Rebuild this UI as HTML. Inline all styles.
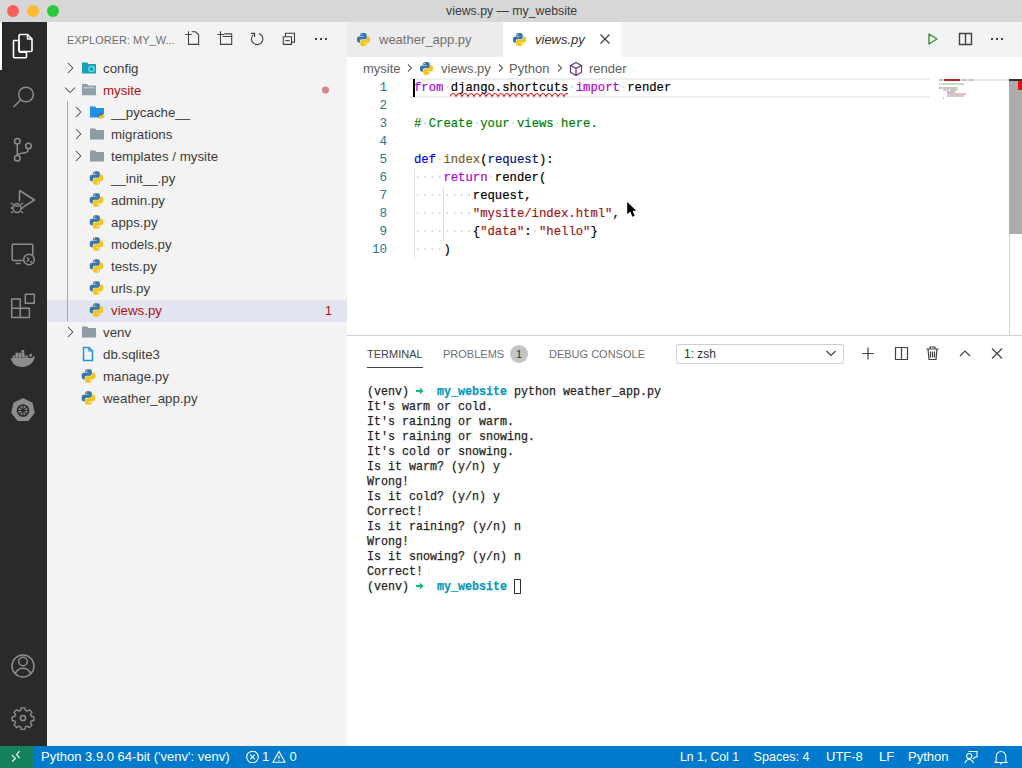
<!DOCTYPE html>
<html><head><meta charset="utf-8">
<style>
*{box-sizing:border-box;margin:0;padding:0}
html,body{width:1022px;height:768px;overflow:hidden;background:#fff;font-family:"Liberation Sans",sans-serif;}
.a{position:absolute;white-space:pre}
#title{left:0;top:0;width:1022px;height:22px;background:#d7d7d7;}
.light{position:absolute;top:5px;width:12px;height:12px;border-radius:50%}
#act{left:0;top:22px;width:47px;height:724px;background:#2a2a2b}
#side{left:47px;top:22px;width:300px;height:724px;background:#f3f3f3}
#tabs{left:347px;top:22px;width:675px;height:35px;background:#f3f3f3}
#panel{left:347px;top:335px;width:675px;height:411px;background:#fff;border-top:1px solid #cfcfcf}
#status{left:0;top:746px;width:1022px;height:22px;background:#007acc}
.st{position:absolute;top:749px;font-size:13px;color:#fff;white-space:pre;line-height:16px}
.fi{position:absolute;font-size:13.3px;color:#3c3c3c;white-space:pre;line-height:16px}
.code{position:absolute;left:414px;font-family:"Liberation Mono",monospace;font-size:13.5px;white-space:pre;color:#000;line-height:18px;-webkit-text-stroke:0.2px currentColor;transform:scaleX(0.9073);transform-origin:0 0}
.ln{position:absolute;left:347px;width:40px;text-align:right;font-family:"Liberation Mono",monospace;font-size:12.6px;color:#237893;line-height:18px}
.term{position:absolute;left:367px;font-family:"Liberation Mono",monospace;font-size:13px;white-space:pre;color:#222;line-height:15px;-webkit-text-stroke:0.25px currentColor;transform:scaleX(0.8974);transform-origin:0 0}
.k{color:#af00db}.d{color:#0000ff}.f{color:#795e26}.p{color:#001080}.s{color:#a31515}.c{color:#008000}
.ws{color:#d4d4d4;-webkit-text-stroke:0}
.bc{position:absolute;top:61px;font-size:13px;color:#616161;white-space:pre;line-height:16px}
.pt{position:absolute;top:347px;font-size:11px;color:#6f6f6f;white-space:pre;line-height:14px}
</style></head><body>
<svg width="0" height="0" style="position:absolute">
<defs>
<symbol id="py" viewBox="0 0 16 16">
<path fill="#3a75a8" d="M7.9 1C4.3 1 4.5 2.6 4.5 2.6v1.6H8v.5H3.1S1 4.5 1 8.1s2 3.4 2 3.4h1.2V9.8s-.1-2 1.9-2h3.4s1.9 0 1.9-1.8V2.9S11.700 1 7.9 1zM6 2.1a.6.6 0 1 1 0 1.2.6.6 0 0 1 0-1.2z"/>
<path fill="#f5c518" d="M8.1 15c3.6 0 3.4-1.6 3.4-1.6v-1.6H8v-.5h4.9S15 11.500 15 7.9s-2-3.4-2-3.4h-1.2v1.7s.1 2-1.9 2H6.5s-1.9 0-1.9 1.8v3.1S4.3 15 8.1 15zm1.9-1.1a.6.6 0 1 1 0-1.2.6.6 0 0 1 0 1.2z"/>
</symbol>
<symbol id="fold" viewBox="0 0 16 16">
<path fill="#90a4ae" d="M1 3h5l1.5 1.5H15V13H1z"/>
</symbol>
</defs>
</svg>

<!-- title bar -->
<div id="title" class="a">
  <div class="light" style="left:7px;background:#fc5f57"></div>
  <div class="light" style="left:27px;background:#fdbc2e"></div>
  <div class="light" style="left:47px;background:#28c840"></div>
  <div class="a" style="left:446px;top:3px;font-size:12.3px;color:#3a3a3a;line-height:16px">views.py — my_website</div>
</div>

<!-- activity bar -->
<div id="act" class="a"></div>
<div class="a" style="left:0;top:22px;width:1.5px;height:48px;background:#fff"></div>
<svg class="a" style="left:0;top:0" width="47" height="768" fill="none" stroke-linejoin="round">
  <!-- explorer -->
  <g stroke="#fff" stroke-width="1.6">
    <path d="M13.5 40.5h5.5v10.5a1.2 1.2 0 0 0 1.2 1.2h6.3v4.5a1 1 0 0 1-1 1h-11a1 1 0 0 1-1-1z"/>
    <path d="M20 34.5h7.5l4.5 4.5v11.5a1 1 0 0 1-1 1h-11a1 1 0 0 1-1-1v-15a1 1 0 0 1 1-1z"/>
    <path d="M27.5 34.5v4.5h4.5"/>
  </g>
  <g stroke="#8d8d8d" stroke-width="1.5">
    <!-- search -->
    <circle cx="26" cy="94.5" r="7.3"/>
    <path d="M20.8 99.7L13.5 107"/>
    <!-- scm -->
    <circle cx="17.3" cy="141.3" r="2.8"/>
    <circle cx="17.3" cy="158.2" r="2.8"/>
    <circle cx="28.5" cy="146" r="2.8"/>
    <path d="M17.3 144.1v11.3M28.5 148.8c0 3-2 4-5 4.3-3 .3-5.5 1-5.9 2.4"/>
    <!-- debug -->
    <path d="M19.5 190.5l15 9.5-11.5 7.2M19.5 190.5v11"/>
    <ellipse cx="17" cy="208" rx="4" ry="4.5"/>
    <path d="M13 204.5l-2-1.5M21 204.5l2-1.5M13 208h-2.5M21 208h2.5M13 211.5l-2 1.5M21 211.5l2 1.5M14.5 206h5"/>
    <!-- remote explorer -->
    <path d="M23 260.5H13.2a1 1 0 0 1-1-1V245.3a1 1 0 0 1 1-1h18.6a1 1 0 0 1 1 1v9.5M15.5 263.5h5"/>
    <circle cx="29" cy="259.5" r="5.3"/>
    <path d="M27 261.5l1.8-2-1.8-2M30 261.8h1.8"/>
    <!-- extensions -->
    <path d="M11.7 299h8.5v9.2h9.2v9.2H11.7z M11.7 308.2h8.5v9.2M25.3 294.3h9v9h-9z"/>
    <!-- accounts -->
    <circle cx="23" cy="666" r="11"/>
    <circle cx="23" cy="661.5" r="4.3"/>
    <path d="M15.2 673.8c1.5-3.5 4.5-5.5 7.8-5.5s6.3 2 7.8 5.5"/>
    <!-- settings -->
    <circle cx="23" cy="718" r="2.6"/>
    <path transform="translate(23 718) scale(0.92) translate(-23 -718)" d="M21 707h4l.6 2.8 1.8.8 2.5-1.6 2.8 2.8-1.6 2.5.8 1.8 2.8.6v4l-2.8.6-.8 1.8 1.6 2.5-2.8 2.8-2.5-1.6-1.8.8-.6 2.8h-4l-.6-2.8-1.8-.8-2.5 1.6-2.8-2.8 1.6-2.5-.8-1.8-2.8-.6v-4l2.8-.6.8-1.8-1.6-2.5 2.8-2.8 2.5 1.6 1.8-.8z"/>
  </g>
  <!-- docker -->
  <path fill="#8d8d8d" d="M11 358H31.5l3.5-2.2c-.3 4.5-4 11-12.5 11.2C15.5 367 11.3 363 11 358z M21.5 350h2.7v2.6h-2.7z M15.5 352.8h2.7v2.6h-2.7z M18.6 352.8h2.7v2.6h-2.7z M21.7 352.8h2.7v2.6h-2.7z M12.8 355.5h2.7v2.3h-2.7z M15.9 355.5h2.7v2.3h-2.7z M19 355.5h2.7v2.3h-2.7z M22.1 355.5h2.7v2.3h-2.7z M25.2 355.5h2.7v2.3h-2.7z M29 356.5c.3-1.8 1.2-3 2-3.3.8.8 1.2 2 1 3.3z"/>
  <!-- kubernetes -->
  <path fill="#8d8d8d" stroke="#8d8d8d" stroke-width="1.6" stroke-linejoin="round" d="M23 399l8.8 4.2 2.1 9.5-6 7.5h-9.8l-6-7.5 2.1-9.5z"/>
  <circle cx="23" cy="410.5" r="5.5" stroke="#2a2a2b" stroke-width="1.6"/>
  <path stroke="#2a2a2b" stroke-width="1.2" d="M23 405v11M17.5 410.5h11M19.1 406.6l7.8 7.8M26.9 406.6l-7.8 7.8"/>
</svg>

<!-- sidebar -->
<div id="side" class="a"></div>
<div class="a" style="left:67px;top:33px;font-size:11px;color:#6f6f6f;line-height:14px">EXPLORER: MY_W...</div>
<svg class="a" style="left:0;top:0" width="347" height="60" fill="none" stroke="#424242" stroke-width="1.1">
  <path d="M185.3 34.5h6.4M188.5 31.3v6.7"/><path d="M188.5 38v6.4h10.1v-9.6l-3-3h-3.9"/>
  <path d="M217.3 34.5h6.7M220.5 31.3v6.7"/><path d="M220.5 38v6.4h11.2v-10.5h-7.5M222.5 36.5h9.2"/>
  <path d="M258.9 33.5A5.7 5.7 0 1 1 253.4 34.6"/><path d="M251 33.4h3.6v3.5"/>
  <path d="M285.5 36.8v-3.5h9v8.8h-3"/><path d="M283.3 36.8h8.2v7.6h-8.2z"/><path d="M285.2 40.6h4.4"/>
</svg>
<div class="a" style="left:315px;top:38px;width:2px;height:2px;background:#424242;box-shadow:5px 0 #424242,10px 0 #424242"></div>

<div id="tree">
<div class="a" style="left:47px;top:300px;width:300px;height:22px;background:#e2e5f1"></div>
<div class="a" style="left:67px;top:101px;width:1px;height:220px;background:#a9a9a9"></div>
<div class="fi" style="left:103px;top:61px;color:#3c3c3c">config</div>
<div class="fi" style="left:103px;top:83px;color:#b01011">mysite</div>
<div class="fi" style="left:111px;top:105px;color:#3c3c3c">__pycache__</div>
<div class="fi" style="left:111px;top:127px;color:#3c3c3c">migrations</div>
<div class="fi" style="left:111px;top:149px;color:#3c3c3c">templates / mysite</div>
<div class="fi" style="left:111px;top:171px;color:#3c3c3c">__init__.py</div>
<div class="fi" style="left:111px;top:193px;color:#3c3c3c">admin.py</div>
<div class="fi" style="left:111px;top:215px;color:#3c3c3c">apps.py</div>
<div class="fi" style="left:111px;top:237px;color:#3c3c3c">models.py</div>
<div class="fi" style="left:111px;top:259px;color:#3c3c3c">tests.py</div>
<div class="fi" style="left:111px;top:281px;color:#3c3c3c">urls.py</div>
<div class="fi" style="left:111px;top:303px;color:#b01011">views.py</div>
<div class="fi" style="left:103px;top:325px;color:#3c3c3c">venv</div>
<div class="fi" style="left:103px;top:347px;color:#3c3c3c">db.sqlite3</div>
<div class="fi" style="left:103px;top:369px;color:#3c3c3c">manage.py</div>
<div class="fi" style="left:103px;top:391px;color:#3c3c3c">weather_app.py</div>
<svg class="a" style="left:0;top:0" width="347" height="420" fill="none">
<path d="M68 63l4.8 5-4.8 5" stroke="#555" stroke-width="1.05"/>
<path d="M82 62.5h5l1.5 1.5h7.5v9.5h-14z" fill="#1ba1b5"/>
<circle cx="91.5" cy="69" r="2.6" stroke="#5fe0ee" stroke-width="1.4"/>
<path d="M65 87.5l5 5 5-5" stroke="#555" stroke-width="1.05"/>
<path d="M82 84h5l1.5 1.5h7.5v9.8h-14z" fill="#90a0aa"/>
<path d="M83.5 87.8h11" stroke="#cfd8dc" stroke-width="1"/>
<path d="M76 107l4.8 5-4.8 5" stroke="#555" stroke-width="1.05"/>
<path d="M90 106.5h5l1.5 1.5h7.5v9.5h-14z" fill="#1e90e6"/>
<use href="#py" x="97" y="111.5" width="8" height="8"/>
<path d="M76 129l4.8 5-4.8 5" stroke="#555" stroke-width="1.05"/>
<path d="M90 128.5h5l1.5 1.5h7.5v9.5h-14z" fill="#8d9ba5"/>
<path d="M76 151l4.8 5-4.8 5" stroke="#555" stroke-width="1.05"/>
<path d="M90 150.5h5l1.5 1.5h7.5v9.5h-14z" fill="#8d9ba5"/>
<use href="#py" x="88.7" y="170.2" width="15.6" height="15.6"/>
<use href="#py" x="88.7" y="192.2" width="15.6" height="15.6"/>
<use href="#py" x="88.7" y="214.2" width="15.6" height="15.6"/>
<use href="#py" x="88.7" y="236.2" width="15.6" height="15.6"/>
<use href="#py" x="88.7" y="258.2" width="15.6" height="15.6"/>
<use href="#py" x="88.7" y="280.2" width="15.6" height="15.6"/>
<use href="#py" x="88.7" y="302.2" width="15.6" height="15.6"/>
<path d="M68 327l4.8 5-4.8 5" stroke="#555" stroke-width="1.05"/>
<path d="M82 326.5h5l1.5 1.5h7.5v9.5h-14z" fill="#8d9ba5"/>
<path d="M83.5 347.5h5.5l3.5 3.5v9.5h-9z" stroke="#1e90e6" stroke-width="1.5"/>
<path d="M89 347.5v3.5h3.5" stroke="#1e90e6" stroke-width="1.2"/>
<use href="#py" x="80.7" y="368.2" width="15.6" height="15.6"/>
<use href="#py" x="80.7" y="390.2" width="15.6" height="15.6"/>
<circle cx="325.5" cy="90" r="3.5" fill="#d4858a"/>
</svg>
<div class="fi" style="left:325px;top:303px;color:#b01011;font-size:12.5px">1</div>
</div><!--/tree-->

<!-- tabs -->
<div id="tabs" class="a"></div>
<div class="a" style="left:347px;top:22px;width:156px;height:35px;background:#ececec"></div>
<div class="a" style="left:503px;top:22px;width:118px;height:35px;background:#fff"></div>
<svg class="a" style="left:356px;top:32px" width="15" height="15"><use href="#py"/></svg>
<div class="a" style="left:379px;top:32px;font-size:13px;color:#717171;line-height:16px">weather_app.py</div>
<svg class="a" style="left:512px;top:32px" width="15" height="15"><use href="#py"/></svg>
<div class="a" style="left:535px;top:32px;font-size:13px;color:#333;font-style:italic;line-height:16px">views.py</div>
<svg class="a" style="left:599px;top:33px" width="12" height="12" stroke="#424242" stroke-width="1.3"><path d="M1.5 1.5l9 9M10.5 1.5l-9 9"/></svg>
<!-- editor actions -->
<svg class="a" style="left:920px;top:27px" width="100" height="24" fill="none" stroke-width="1.4">
  <path d="M9 7l8 5-8 5z" stroke="#388a34" stroke-linejoin="round"/>
  <path d="M39.5 6.5h12v11h-12zM45.5 6.5v11" stroke="#424242"/>
</svg>
<div class="a" style="left:991px;top:38px;width:2px;height:2px;background:#424242;box-shadow:5px 0 #424242,10px 0 #424242"></div>

<div id="edit">
<div class="a" style="left:409px;top:78px;width:521px;height:20px;border-top:2px solid #eeeeee;border-bottom:2px solid #eeeeee"></div>
<div class="ln" style="top:79px">1</div>
<div class="code" style="top:79px"><span class="k">from</span><span class="ws">·</span>django.shortcuts<span class="ws">·</span><span class="k">import</span><span class="ws">·</span>render</div>
<div class="ln" style="top:97px">2</div>
<div class="ln" style="top:115px">3</div>
<div class="code" style="top:115px"><span class="c">#</span><span class="ws">·</span><span class="c">Create</span><span class="ws">·</span><span class="c">your</span><span class="ws">·</span><span class="c">views</span><span class="ws">·</span><span class="c">here.</span></div>
<div class="ln" style="top:133px">4</div>
<div class="ln" style="top:151px">5</div>
<div class="code" style="top:151px"><span class="d">def</span><span class="ws">·</span><span class="f">index</span>(<span class="p">request</span>):</div>
<div class="ln" style="top:169px">6</div>
<div class="code" style="top:169px"><span class="ws">····</span><span class="k">return</span><span class="ws">·</span>render(</div>
<div class="ln" style="top:187px">7</div>
<div class="code" style="top:187px"><span class="ws">········</span>request,</div>
<div class="ln" style="top:205px">8</div>
<div class="code" style="top:205px"><span class="ws">········</span><span class="s">"mysite/index.html"</span>,</div>
<div class="ln" style="top:223px">9</div>
<div class="code" style="top:223px"><span class="ws">········</span>{<span class="s">"data"</span>:<span class="ws">·</span><span class="s">"hello"</span>}</div>
<div class="ln" style="top:241px">10</div>
<div class="code" style="top:241px"><span class="ws">····</span>)</div>
<div class="a" style="left:414px;top:169px;width:1px;height:90px;background:#dedede"></div>
<div class="a" style="left:443px;top:187px;width:1px;height:54px;background:#dedede"></div>
<div class="a" style="left:413px;top:79px;width:2px;height:18px;background:#000"></div>
<svg class="a" style="left:450px;top:92px" width="118" height="6"><path d="M0 4.3 c1 -1.8 2 -2.8 3 -2.8 c1 0 2 1 3 2.8 c1 -1.8 2 -2.8 3 -2.8 c1 0 2 1 3 2.8 c1 -1.8 2 -2.8 3 -2.8 c1 0 2 1 3 2.8 c1 -1.8 2 -2.8 3 -2.8 c1 0 2 1 3 2.8 c1 -1.8 2 -2.8 3 -2.8 c1 0 2 1 3 2.8 c1 -1.8 2 -2.8 3 -2.8 c1 0 2 1 3 2.8 c1 -1.8 2 -2.8 3 -2.8 c1 0 2 1 3 2.8 c1 -1.8 2 -2.8 3 -2.8 c1 0 2 1 3 2.8 c1 -1.8 2 -2.8 3 -2.8 c1 0 2 1 3 2.8 c1 -1.8 2 -2.8 3 -2.8 c1 0 2 1 3 2.8 c1 -1.8 2 -2.8 3 -2.8 c1 0 2 1 3 2.8 c1 -1.8 2 -2.8 3 -2.8 c1 0 2 1 3 2.8 c1 -1.8 2 -2.8 3 -2.8 c1 0 2 1 3 2.8 c1 -1.8 2 -2.8 3 -2.8 c1 0 2 1 3 2.8 c1 -1.8 2 -2.8 3 -2.8 c1 0 2 1 3 2.8 c1 -1.8 2 -2.8 3 -2.8 c1 0 2 1 3 2.8 c1 -1.8 2 -2.8 3 -2.8 c1 0 2 1 3 2.8 c1 -1.8 2 -2.8 3 -2.8 c1 0 2 1 3 2.8 c1 -1.8 2 -2.8 3 -2.8 c1 0 2 1 3 2.8 c1 -1.8 2 -2.8 3 -2.8 c1 0 2 1 3 2.8" fill="none" stroke="#d81818" stroke-width="1.2"/></svg>
<div class="bc" style="left:363px">mysite</div>
<svg class="a" style="left:405px;top:60px" width="240" height="16" fill="none" stroke="#616161" stroke-width="1.1"><path d="M3 4.5l3.5 3.5-3.5 3.5"/><path d="M94 4.5l3.5 3.5-3.5 3.5"/><path d="M153 4.5l3.5 3.5-3.5 3.5"/></svg>
<svg class="a" style="left:419px;top:61px" width="15" height="15"><use href="#py"/></svg>
<div class="bc" style="left:441px">views.py</div>
<div class="bc" style="left:509px">Python</div>
<svg class="a" style="left:568px;top:61px" width="16" height="16" fill="none" stroke="#652d90" stroke-width="1.2" stroke-linejoin="round"><path d="M8 1.5l5.5 3v6.8L8 14.5l-5.5-3.2V4.5z M2.5 4.5L8 7.6l5.5-3.1M8 7.6v6.9"/></svg>
<div class="bc" style="left:589px">render</div>
<div class="a" style="left:939px;top:79px;width:70px;height:2px;background:#e1ebf5"></div>
<div class="a" style="left:939px;top:79px;width:4px;height:2px;background:#b89cc0;opacity:0.6"></div>
<div class="a" style="left:944px;top:79px;width:16px;height:2px;background:#b0282a;opacity:1"></div>
<div class="a" style="left:961px;top:79px;width:6px;height:2px;background:#c0a0c8;opacity:0.6"></div>
<div class="a" style="left:968px;top:79px;width:6px;height:2px;background:#a8b0a8;opacity:0.6"></div>
<div class="a" style="left:939px;top:83px;width:1px;height:2px;background:#90b890;opacity:0.6"></div>
<div class="a" style="left:941px;top:83px;width:23px;height:2px;background:#a0c4a0;opacity:0.6"></div>
<div class="a" style="left:939px;top:87px;width:3px;height:2px;background:#8080e0;opacity:0.6"></div>
<div class="a" style="left:943px;top:87px;width:15px;height:2px;background:#a8a090;opacity:0.6"></div>
<div class="a" style="left:943px;top:89px;width:6px;height:2px;background:#c8a0d0;opacity:0.6"></div>
<div class="a" style="left:950px;top:89px;width:7px;height:2px;background:#a0a0a0;opacity:0.6"></div>
<div class="a" style="left:947px;top:91px;width:8px;height:2px;background:#9898c0;opacity:0.6"></div>
<div class="a" style="left:947px;top:93px;width:19px;height:2px;background:#c89898;opacity:0.6"></div>
<div class="a" style="left:947px;top:95px;width:17px;height:2px;background:#b8a4a4;opacity:0.6"></div>
<div class="a" style="left:943px;top:97px;width:1px;height:2px;background:#a0a0a0;opacity:0.6"></div>
<div class="a" style="left:939px;top:79px;width:70px;height:2px;background:rgba(0,0,0,0.0)"></div>
<div class="a" style="left:1009px;top:79px;width:1px;height:256px;background:#d5d5d5"></div>
<div class="a" style="left:1009px;top:79px;width:13px;height:155px;background:#acacac"></div>
<div class="a" style="left:1009px;top:79px;width:13px;height:2px;background:#333"></div>
<div class="a" style="left:1018px;top:81px;width:4px;height:9px;background:#e51400"></div>
<svg class="a" style="left:624px;top:199px" width="16" height="22"><path transform="translate(3.2 3) scale(1.08)" d="M0 0V11.4L2.8 8.8 4.8 13.6 6.9 12.8 5 8.1H8.4Z" fill="#000" stroke="#fff" stroke-width="1.2" stroke-linejoin="round" paint-order="stroke"/></svg>
</div><!--/edit-->

<!-- panel -->
<div id="panel" class="a"></div>
<div id="term">
<div class="pt" style="left:367px;color:#424242">TERMINAL</div>
<div class="a" style="left:367px;top:367px;width:56px;height:1px;background:#424242"></div>
<div class="pt" style="left:443px">PROBLEMS</div>
<div class="a" style="left:510px;top:345px;width:18px;height:18px;border-radius:50%;background:#c4c4c4"></div>
<div class="a" style="left:510px;top:347px;width:18px;text-align:center;font-size:11px;line-height:14px;color:#333">1</div>
<div class="pt" style="left:549px">DEBUG CONSOLE</div>
<div class="a" style="left:676px;top:344px;width:168px;height:20px;border:1px solid #cecece;border-radius:3px;background:#fff"></div>
<div class="a" style="left:684px;top:347px;font-size:12px;line-height:14px;color:#333">1: zsh</div>
<svg class="a" style="left:0;top:330px" width="1022" height="40" fill="none" stroke="#424242" stroke-width="1.2"><path d="M826.5 21l4.5 4.5 4.5-4.5"/><path d="M868 17.5v12M862 23.5h12"/><path d="M895.5 17.5h12v12h-12zM901.5 17.5v12"/><path d="M926.5 19h12M930 19v-2h5v2M928 19l1 10.5h7l1-10.5M930.5 21.5v6M932.5 21.5v6M934.5 21.5v6"/><path d="M960 26l5-5 5 5"/><path d="M992 18.5l10 10M1002 18.5l-10 10"/></svg>
<div class="term" style="top:384px">(venv)    <b style="color:#0598bc">my_website</b> python weather_app.py</div>
<div class="term" style="top:399px">It's warm or cold.</div>
<div class="term" style="top:414px">It's raining or warm.</div>
<div class="term" style="top:429px">It's raining or snowing.</div>
<div class="term" style="top:444px">It's cold or snowing.</div>
<div class="term" style="top:459px">Is it warm? (y/n) y</div>
<div class="term" style="top:474px">Wrong!</div>
<div class="term" style="top:489px">Is it cold? (y/n) y</div>
<div class="term" style="top:504px">Correct!</div>
<div class="term" style="top:519px">Is it raining? (y/n) n</div>
<div class="term" style="top:534px">Wrong!</div>
<div class="term" style="top:549px">Is it snowing? (y/n) n</div>
<div class="term" style="top:564px">Correct!</div>
<div class="term" style="top:579px">(venv)    <b style="color:#0598bc">my_website</b> </div>
<svg class="a" style="left:415px;top:386px" width="10" height="10"><path d="M1 5h5" stroke="#0dbc79" stroke-width="2"/><path d="M4.8 1.6l3.8 3.4-3.8 3.4z" fill="#0dbc79"/></svg>
<svg class="a" style="left:415px;top:581px" width="10" height="10"><path d="M1 5h5" stroke="#0dbc79" stroke-width="2"/><path d="M4.8 1.6l3.8 3.4-3.8 3.4z" fill="#0dbc79"/></svg>
<div class="a" style="left:514px;top:579px;width:7px;height:15px;border:1px solid #333"></div>
</div><!--/term-->

<!-- status bar -->
<div id="status" class="a"></div>
<div class="a" style="left:0;top:746px;width:33px;height:22px;background:#16825d"></div>
<div id="stat">
<svg class="a" style="left:9px;top:750px" width="16" height="14" fill="none" stroke="#fff" stroke-width="1.1"><path d="M3 5.2l3.4 3.2-3.4 3.2M10.6 1l-3 3.6 3 3.6"/></svg>
<div class="st" style="left:41px">Python 3.9.0 64-bit ('venv': venv)</div>
<svg class="a" style="left:244px;top:748px" width="50" height="18" fill="none" stroke="#fff" stroke-width="1.1"><circle cx="8.5" cy="9" r="5.8"/><path d="M6.2 6.7l4.6 4.6M10.8 6.7l-4.6 4.6"/><path d="M35 3.5l6 10.8H29z M35 7.5v3.5M35 12v.8"/></svg>
<div class="st" style="left:262px">1</div>
<div class="st" style="left:289.5px">0</div>
<div class="st" style="left:680px;font-size:12.2px">Ln 1, Col 1</div>
<div class="st" style="left:753.5px;font-size:12.6px">Spaces: 4</div>
<div class="st" style="left:826px">UTF-8</div>
<div class="st" style="left:879px">LF</div>
<div class="st" style="left:908px">Python</div>
<svg class="a" style="left:960px;top:748px" width="56" height="18" fill="none" stroke="#fff" stroke-width="1.05"><circle cx="9.2" cy="8" r="2.6"/><path d="M5 15.2c.6-2.5 2.2-3.8 4.2-3.8s3.6 1.3 4.2 3.8M8.5 3.5H17V9h-1.8l-2.2 2"/><path d="M36.2 13.2V8.2a4.8 4.8 0 0 1 9.6 0v5l1 1.2H35.2z M40 15.8h2"/></svg>
</div><!--/stat-->
</body></html>
